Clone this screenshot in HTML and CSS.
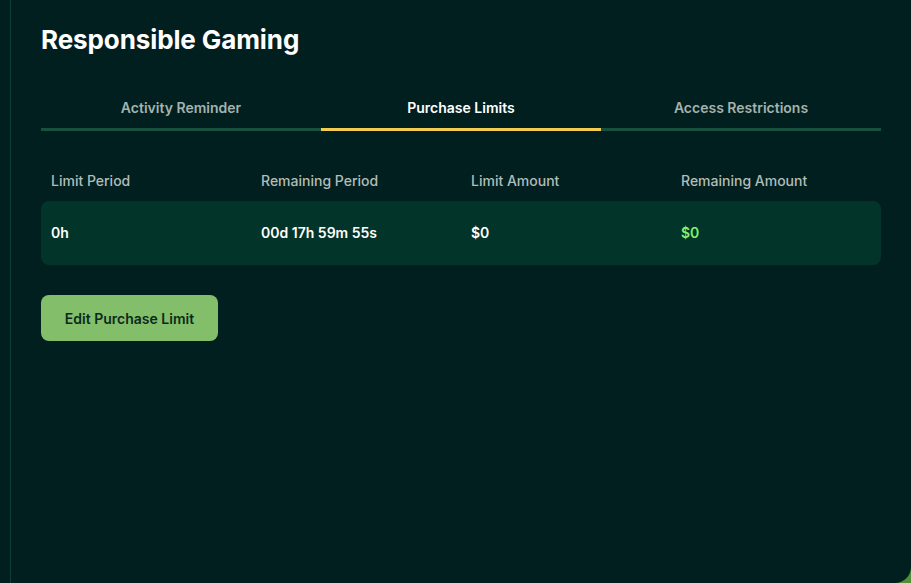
FILE: index.html
```html
<!DOCTYPE html>
<html lang="en">
<head>
<meta charset="utf-8">
<title>Responsible Gaming</title>
<link rel="stylesheet" href="styles.css">
</head>
<body>
<div class="panel">
  <h1 class="title">Responsible Gaming</h1>
  <nav class="tabs">
    <div class="tab">Activity Reminder</div>
    <div class="tab active">Purchase Limits</div>
    <div class="tab">Access Restrictions</div>
  </nav>
  <div class="table">
    <div class="row head">
      <div class="cell">Limit Period</div>
      <div class="cell">Remaining Period</div>
      <div class="cell">Limit Amount</div>
      <div class="cell">Remaining Amount</div>
    </div>
    <div class="row body">
      <div class="cell">0h</div>
      <div class="cell">00d 17h 59m 55s</div>
      <div class="cell">$0</div>
      <div class="cell green">$0</div>
    </div>
  </div>
  <button class="btn">Edit Purchase Limit</button>
</div>
</body>
</html>
```
FILE: styles.css
```css
* { box-sizing: border-box; }
html, body {
  margin: 0;
  height: 100%;
}
body {
  background: radial-gradient(circle at 100% 100%, #4f8f3a 0 24px, #021f1f 25px);
  font-family: Inter, "Noto Sans", sans-serif;
  overflow: hidden;
}
.panel {
  margin-left: 10px;
  height: 583px;
  border-left: 1px solid #0e3d31;
  background: #021f1f;
  border-bottom-right-radius: 16px;
  padding: 22px 30px;
}
.title {
  margin: 0;
  font-size: 26px;
  line-height: 36px;
  font-weight: 700;
  color: #ffffff;
  letter-spacing: -0.1px;
}
.tabs {
  display: grid;
  grid-template-columns: repeat(3, 1fr);
  margin-top: 22px;
}
.tab {
  text-align: center;
  font-size: 14px;
  line-height: 20px;
  font-weight: 600;
  color: #a3b3ae;
  padding: 18px 0 10px;
  border-bottom: 3px solid #17503e;
}
.tab.active {
  color: #ffffff;
  border-bottom-color: #f2cd52;
}
.table {
  margin-top: 30px;
}
.row {
  display: grid;
  grid-template-columns: repeat(4, 1fr);
}
.cell {
  padding: 0 10px;
  font-size: 14px;
  line-height: 20px;
}
.head {
  padding: 10px 0;
}
.head .cell {
  color: #b0bdb9;
  font-weight: 500;
}
.body {
  background: #03342a;
  border-radius: 8px;
  padding: 22px 0;
}
.body .cell {
  color: #ffffff;
  font-weight: 600;
}
.body .cell.green {
  color: #7ef26a;
}
.btn {
  margin-top: 30px;
  width: 177px;
  height: 46px;
  border: 0;
  border-radius: 8px;
  background: #83bf6a;
  color: #0b2a1c;
  font-family: Inter, "Noto Sans", sans-serif;
  font-size: 14px;
  font-weight: 600;
  cursor: pointer;
}
```
